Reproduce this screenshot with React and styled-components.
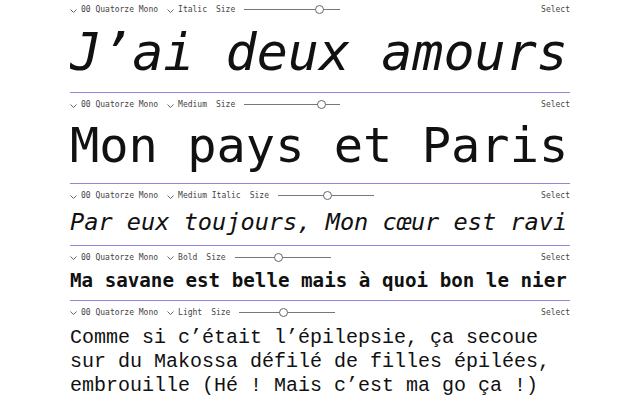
import React from "react";
import styled, { createGlobalStyle } from "styled-components";

const GlobalStyle = createGlobalStyle`
  html, body {
    margin: 0;
    padding: 0;
    background: #ffffff;
  }
  body {
    font-family: "DejaVu Sans Mono", monospace;
    color: #111111;
    overflow: hidden;
  }
`;

const specimens = [
  {
    id: "italic",
    style: "Italic",
    font: "DejaVu Sans Mono",
    weight: 400,
    italic: true,
    size: 51.7,
    value: 78,
    pad: 9,
    first: true,
    text: "J’ai deux amours",
  },
  {
    id: "medium",
    style: "Medium",
    font: "DejaVu Sans Mono",
    weight: 400,
    italic: false,
    size: 48.7,
    value: 80,
    pad: 9,
    text: "Mon pays et Paris",
  },
  {
    id: "medium-italic",
    style: "Medium Italic",
    font: "DejaVu Sans Mono",
    weight: 400,
    italic: true,
    size: 23.6,
    value: 52,
    pad: 8,
    lift: 1,
    text: "Par eux toujours, Mon cœur est ravi",
  },
  {
    id: "bold",
    style: "Bold",
    font: "DejaVu Sans Mono",
    weight: 700,
    italic: false,
    size: 19.2,
    value: 46,
    pad: 8,
    text: "Ma savane est belle mais à quoi bon le nier",
  },
  {
    id: "light",
    style: "Light",
    font: "Liberation Mono",
    weight: 400,
    italic: false,
    size: 20,
    value: 46,
    pad: 0,
    lift: 2,
    wrap: true,
    text: "Comme si c’était l’épilepsie, ça secoue sur du Makossa défilé de filles épilées, embrouille (Hé ! Mais c’est ma go ça !)",
  },
];

const Page = styled.main`
  width: 500px;
  margin: 0 0 0 70px;
`;

const Section = styled.section`
  border-top: ${(props) => (props.$first ? "none" : "1px solid #8f86de")};
  margin-top: ${(props) => (props.$first ? "-2px" : "0")};
  padding-bottom: ${(props) => props.$pad}px;
`;

const Toolbar = styled.div`
  height: 23px;
  display: flex;
  align-items: center;
  justify-content: space-between;
  font-family: "DejaVu Sans Mono", monospace;
  font-size: 8px;
  color: #444444;
`;

const ToolGroup = styled.div`
  display: flex;
  align-items: center;
  gap: 9px;
`;

const Dropdown = styled.div`
  display: flex;
  align-items: center;
  gap: 4px;
  white-space: nowrap;
`;

const Chevron = styled.svg`
  width: 7px;
  height: 4px;
  margin-top: 2px;
  flex: none;
`;

const SizeLabel = styled.span`
  white-space: nowrap;
`;

const Slider = styled.div`
  position: relative;
  width: 96px;
  height: 9px;
  display: flex;
  align-items: center;
`;

const Track = styled.div`
  width: 100%;
  height: 1px;
  background: #777777;
`;

const Thumb = styled.div`
  position: absolute;
  top: 0;
  width: 7px;
  height: 7px;
  margin-left: -4.5px;
  border: 1px solid #666666;
  border-radius: 50%;
  background: #ffffff;
`;

const SelectLabel = styled.span`
  color: #444444;
`;

const Specimen = styled.p`
  margin: ${(props) => props.$lift || 0}px 0 0 0;
  font-family: ${(props) => `"${props.$font}", "DejaVu Sans Mono", monospace`};
  font-weight: ${(props) => props.$weight};
  font-style: ${(props) => (props.$italic ? "italic" : "normal")};
  font-size: ${(props) => props.$size}px;
  line-height: ${(props) => (props.$wrap ? "24px" : "1.2")};
  white-space: ${(props) => (props.$wrap ? "normal" : "nowrap")};
  overflow: hidden;
  color: #111111;
`;

const ChevronIcon = () => (
  <Chevron viewBox="0 0 7 4" fill="none">
    <path d="M0.5 0.5 L3.5 3.5 L6.5 0.5" stroke="#555555" strokeWidth="0.9" />
  </Chevron>
);

const Controls = ({ styleName, value }) => (
  <Toolbar>
    <ToolGroup>
      <Dropdown>
        <ChevronIcon />
        <span>00 Quatorze Mono</span>
      </Dropdown>
      <Dropdown>
        <ChevronIcon />
        <span>{styleName}</span>
      </Dropdown>
      <SizeLabel>Size</SizeLabel>
      <Slider>
        <Track />
        <Thumb style={{ left: `${value}%` }} />
      </Slider>
    </ToolGroup>
    <SelectLabel>Select</SelectLabel>
  </Toolbar>
);

export default function App() {
  return (
    <>
      <GlobalStyle />
      <Page>
        {specimens.map((item) => (
          <Section key={item.id} $first={item.first} $pad={item.pad}>
            <Controls styleName={item.style} value={item.value} />
            <Specimen
              $font={item.font}
              $weight={item.weight}
              $italic={item.italic}
              $size={item.size}
              $wrap={item.wrap}
              $lift={item.lift}
            >
              {item.text}
            </Specimen>
          </Section>
        ))}
      </Page>
    </>
  );
}
